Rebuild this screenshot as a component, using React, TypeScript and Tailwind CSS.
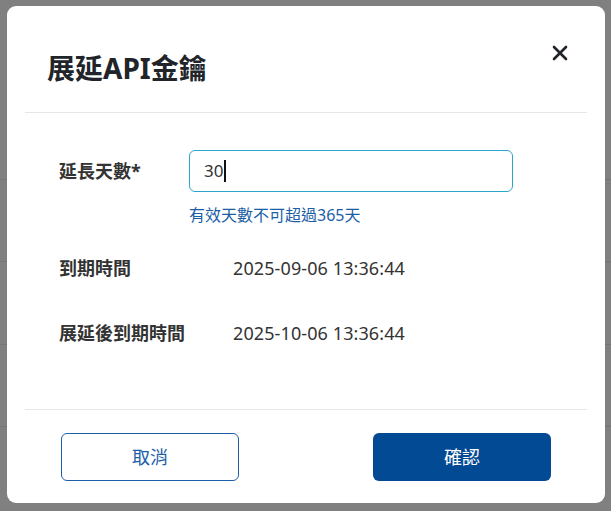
import { X } from 'lucide-react'

const font = 'font-["Noto_Sans","Noto_Sans_CJK_TC",sans-serif]'

function InfoRow({ label, value, className }: { label: string; value: string; className?: string }) {
  return (
    <div className={`flex items-center ${className ?? ''}`}>
      <div className="w-[174px] text-[18px] font-bold text-[#333333] leading-[26px]">{label}</div>
      <div className="text-[18px] tracking-[0.1px] text-[#333333] leading-[26px]">{value}</div>
    </div>
  )
}

export default function App() {
  return (
    <div className={`relative w-[611px] h-[511px] overflow-hidden bg-[#808080] ${font}`}>
      {/* page behind the overlay */}
      <div className="flex flex-col">
        <div className="h-[180px] border-b border-[#747474]" />
        <div className="h-[82px] border-b border-[#747474]" />
        <div className="h-[83px] border-b border-[#747474]" />
        <div className="h-[82px] border-b border-[#747474]" />
      </div>

      {/* dialog */}
      <div className="absolute left-[7px] top-[6px] w-[598px] h-[497px] bg-white rounded-[9px] flex flex-col px-[18px]">
        <div className="h-[107px] border-b border-[#e6e6e6] flex justify-between">
          <h2 className="pt-[45px] pl-[22px] text-[28px] leading-[34px] font-bold text-[#212529]">展延API金鑰</h2>
          <button className="mt-[35px] mr-[15px] w-[24px] h-[24px] flex items-center justify-center text-[#212529]">
            <X className="w-[24px] h-[24px]" strokeWidth={2.6} />
          </button>
        </div>

        <div className="flex-1 pl-[34px] pt-[37px]">
          <div className="flex">
            <div className="w-[130px] h-[42px] flex items-center text-[18px] font-bold text-[#333333]">延長天數*</div>
            <div className="flex flex-col">
              <div className="w-[324px] h-[42px] border border-[#2aa6cc] rounded-[6px] flex items-center px-[14px] text-[17px] text-[#333333]">
                30<span className="ml-[1px] w-[1.5px] h-[22px] bg-[#111111]" />
              </div>
              <div className="mt-[12px] text-[16px] leading-[22px] text-[#1b5ea6]">有效天數不可超過365天</div>
            </div>
          </div>
          <InfoRow className="mt-[29px]" label="到期時間" value="2025-09-06 13:36:44" />
          <InfoRow className="mt-[39px]" label="展延後到期時間" value="2025-10-06 13:36:44" />
        </div>

        <div className="h-[94px] border-t border-[#e6e6e6] flex justify-between items-start pt-[23px] pl-[36px] pr-[36px]">
          <button className="w-[178px] h-[48px] rounded-[6px] border border-[#1d5ea8] text-[#1d5ea8] text-[18px] bg-white">取消</button>
          <button className="w-[178px] h-[48px] rounded-[6px] bg-[#034a94] text-white text-[18px]">確認</button>
        </div>
      </div>
    </div>
  )
}
